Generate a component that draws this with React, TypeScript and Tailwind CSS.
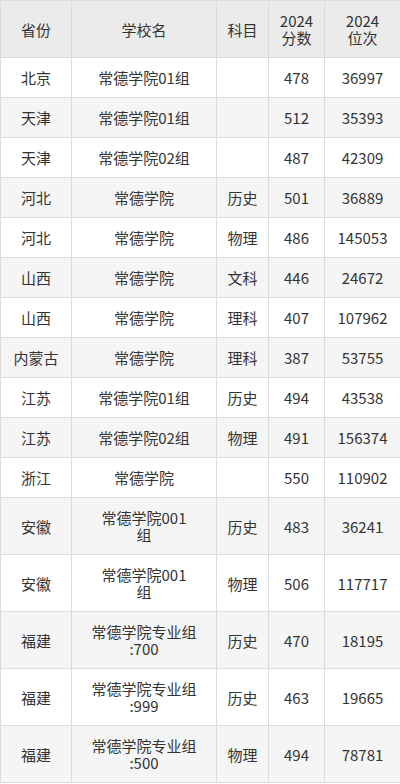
import React from "react";

type Row = {
  province: string;
  school: React.ReactNode;
  subject: string;
  score: string;
  rank: string;
};

const rows: Row[] = [
  { province: "北京", school: "常德学院01组", subject: "", score: "478", rank: "36997" },
  { province: "天津", school: "常德学院01组", subject: "", score: "512", rank: "35393" },
  { province: "天津", school: "常德学院02组", subject: "", score: "487", rank: "42309" },
  { province: "河北", school: "常德学院", subject: "历史", score: "501", rank: "36889" },
  { province: "河北", school: "常德学院", subject: "物理", score: "486", rank: "145053" },
  { province: "山西", school: "常德学院", subject: "文科", score: "446", rank: "24672" },
  { province: "山西", school: "常德学院", subject: "理科", score: "407", rank: "107962" },
  { province: "内蒙古", school: "常德学院", subject: "理科", score: "387", rank: "53755" },
  { province: "江苏", school: "常德学院01组", subject: "历史", score: "494", rank: "43538" },
  { province: "江苏", school: "常德学院02组", subject: "物理", score: "491", rank: "156374" },
  { province: "浙江", school: "常德学院", subject: "", score: "550", rank: "110902" },
  { province: "安徽", school: <>常德学院001<br />组</>, subject: "历史", score: "483", rank: "36241" },
  { province: "安徽", school: <>常德学院001<br />组</>, subject: "物理", score: "506", rank: "117717" },
  { province: "福建", school: <>常德学院专业组<br />:700</>, subject: "历史", score: "470", rank: "18195" },
  { province: "福建", school: <>常德学院专业组<br />:999</>, subject: "历史", score: "463", rank: "19665" },
  { province: "福建", school: <>常德学院专业组<br />:500</>, subject: "物理", score: "494", rank: "78781" },
];

const cell = "border border-[#dcdcdc] px-1 py-[11px] text-center align-middle whitespace-nowrap";

export default function App() {
  return (
    <div className="w-[400px] bg-white text-[15px] leading-[17px] text-[#333333] font-['Noto_Sans_CJK_SC','Noto_Sans',sans-serif]">
      <table className="w-[400px] table-fixed border-collapse">
        <colgroup>
          <col className="w-[71px]" />
          <col className="w-[145px]" />
          <col className="w-[52px]" />
          <col className="w-[56px]" />
          <col className="w-[76px]" />
        </colgroup>
        <thead>
          <tr className="bg-[#ebebeb]">
            <th className={`${cell} font-normal`}>省份</th>
            <th className={`${cell} font-normal`}>学校名</th>
            <th className={`${cell} font-normal`}>科目</th>
            <th className={`${cell} font-normal`}>
              2024
              <br />
              分数
            </th>
            <th className={`${cell} font-normal`}>
              2024
              <br />
              位次
            </th>
          </tr>
        </thead>
        <tbody>
          {rows.map((r, i) => (
            <tr key={i} className={i % 2 === 1 ? "bg-[#f5f5f5]" : "bg-white"}>
              <td className={cell}>{r.province}</td>
              <td className={cell}>{r.school}</td>
              <td className={cell}>{r.subject}</td>
              <td className={cell}>{r.score}</td>
              <td className={cell}>{r.rank}</td>
            </tr>
          ))}
        </tbody>
      </table>
    </div>
  );
}
